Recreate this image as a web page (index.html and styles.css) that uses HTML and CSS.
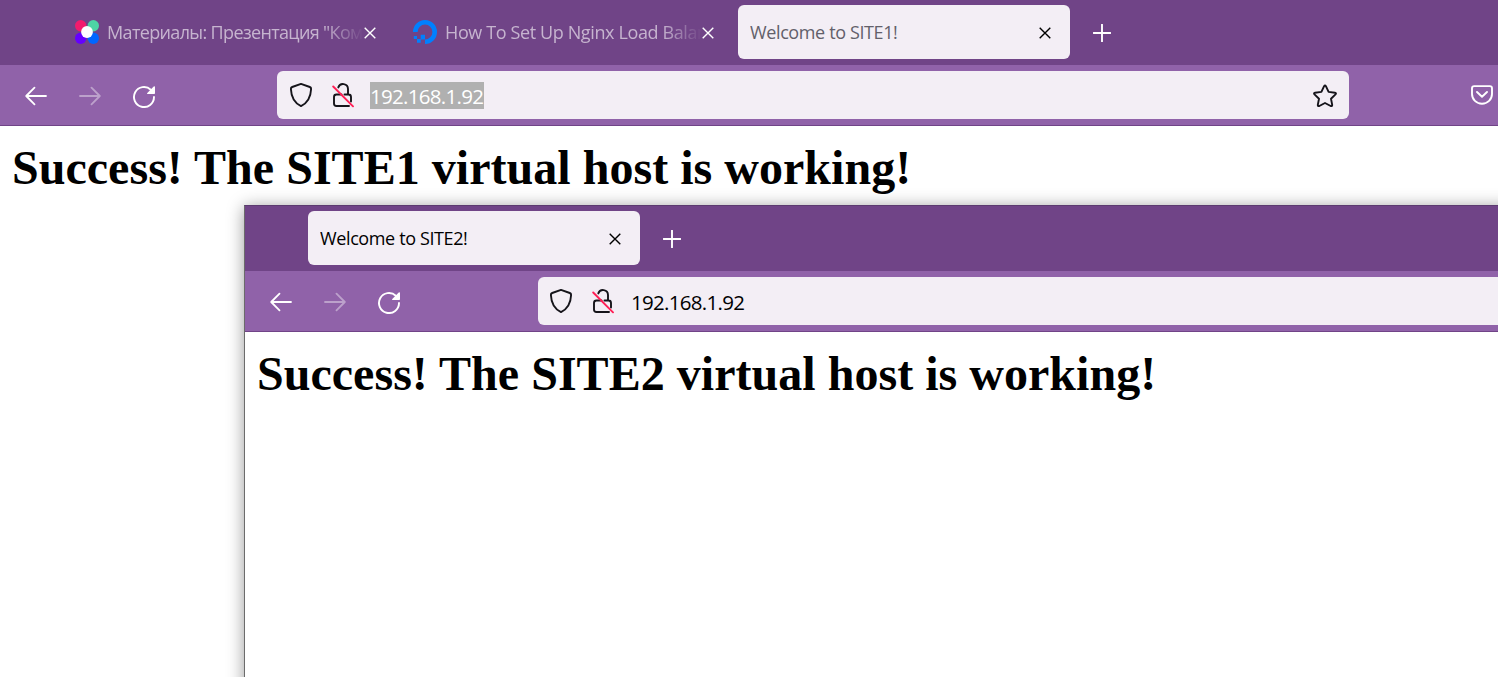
FILE: index.html
```
<!DOCTYPE html>
<html lang="en">
<head>
<meta charset="utf-8">
<title>Welcome to SITE1!</title>
<link rel="stylesheet" href="styles.css">
</head>
<body>
<svg class="defs" aria-hidden="true">
  <symbol id="close" viewBox="0 0 12 12"><path d="M.7.7l10.6 10.6M11.3.7L.7 11.3" fill="none" stroke="currentColor" stroke-width="1.4"/></symbol>
  <symbol id="plus" viewBox="0 0 18 18"><path d="M9 .5v17M.5 9h17" fill="none" stroke="currentColor" stroke-width="1.9" stroke-linecap="round"/></symbol>
  <symbol id="back" viewBox="0 0 24 24"><path d="M22 12H2.5M10.5 3.7L2.2 12l8.3 8.3" fill="none" stroke="currentColor" stroke-width="1.8" stroke-linecap="round" stroke-linejoin="round"/></symbol>
  <symbol id="reload" viewBox="0 0 24 24"><path d="M22 13a10 10 0 1 1-3.2-7.3" fill="none" stroke="currentColor" stroke-width="1.9" stroke-linecap="round"/><path d="M23 3.200v6.100q0 .8-.8.8h-6.500q-1.300 0-.4-1l6.400-6.600q1.300-.9 1.300.7z" fill="currentColor"/></symbol>
  <symbol id="shield" viewBox="0 0 24 26"><path d="M12 1.900L20.800 5q1.400.5 1.300 2C21.800 14.500 19.500 20.500 12 24.100 4.500 20.500 2.200 14.500 1.900 7q-.1-1.500 1.300-2z" fill="none" stroke="currentColor" stroke-width="1.900" stroke-linejoin="round"/></symbol>
  <symbol id="lock" viewBox="0 0 22 26"><path d="M6.300 5.400A5 5 0 0 1 16 7v5.500M9.500 12.500H4.500q-2.500 0-2.500 2.500v6.500q0 2.500 2.500 2.500h12.500M12.500 12.500h4q2.500 0 2.500 2.500v4.500" fill="none" stroke="currentColor" stroke-width="1.900" stroke-linecap="round"/><path d="M1.200 4.500l19.800 19.800" stroke="#ff1f55" stroke-width="1.900" stroke-linecap="round"/></symbol>
  <symbol id="star" viewBox="0 0 26 26"><path d="M12.100 3.200q.9-1.500 1.800 0l2.700 5.700 6.300.8q1.800.4.600 1.700l-4.500 4.300 1.200 6.200q.1 1.700-1.500 1.100L13 20l-5.700 3q-1.600.600-1.500-1.100L7 15.700l-4.500-4.300q-1.200-1.300.6-1.700l6.300-.8z" fill="none" stroke="currentColor" stroke-width="1.900" stroke-linejoin="round"/></symbol>
  <symbol id="pocket" viewBox="0 0 22 20"><path d="M3.200 1.100h15.600q2.200 0 2.200 2.200V9a10 9.700 0 0 1-20 0V3.300q0-2.200 2.200-2.200zM6 7l5 4.700L16 7" fill="none" stroke="currentColor" stroke-width="1.900" stroke-linecap="round" stroke-linejoin="round"/></symbol>
</svg>
<div class="window main-window">
  <div class="tabs">
    <div class="tab first">
      <svg class="favicon" viewBox="0 0 24 24"><circle cx="5.700" cy="5.700" r="5.700" fill="#f21b6d"/><circle cx="18.300" cy="5.700" r="5.700" fill="#4dd4a5"/><circle cx="5.700" cy="18.300" r="5.700" fill="#6500ff"/><circle cx="18.300" cy="18.300" r="5.700" fill="#0066ff"/><circle cx="12" cy="12" r="5.900" fill="#fff"/></svg>
      <span class="label faded t1">Материалы: Презентация "Ком</span>
      <svg class="close"><use href="#close"/></svg>
    </div>
    <div class="tab second">
      <svg class="favicon" viewBox="0 0 24 24"><path d="M2.300 12A9.700 9.700 0 1 1 12 21.700" fill="none" stroke="#0080ff" stroke-width="4.600"/><path d="M7.700 14.800H12v4.700H7.700zM4 19h3.700v3.700H4zM.8 16H4v3H.8z" fill="#0080ff"/></svg>
      <span class="label faded t2">How To Set Up Nginx Load Balan</span>
      <svg class="close"><use href="#close"/></svg>
    </div>
    <div class="tab active">
      <span class="label muted">Welcome to SITE1!</span>
      <svg class="close"><use href="#close"/></svg>
    </div>
    <svg class="plus"><use href="#plus"/></svg>
  </div>
  <div class="toolbar">
    <div class="nav">
      <svg><use href="#back"/></svg>
      <svg class="forward"><use href="#back"/></svg>
      <svg><use href="#reload"/></svg>
    </div>
    <div class="field">
      <svg class="shield"><use href="#shield"/></svg>
      <svg class="lock"><use href="#lock"/></svg>
      <span class="address selected">192.168.1.92</span>
      <svg class="star"><use href="#star"/></svg>
    </div>
    <svg class="pocket"><use href="#pocket"/></svg>
  </div>
  <h1>Success! The SITE1 virtual host is working!</h1>
</div>
<div class="window front-window">
  <div class="tabs">
    <div class="tab active">
      <span class="label">Welcome to SITE2!</span>
      <svg class="close"><use href="#close"/></svg>
    </div>
    <svg class="plus"><use href="#plus"/></svg>
  </div>
  <div class="toolbar">
    <div class="nav">
      <svg><use href="#back"/></svg>
      <svg class="forward"><use href="#back"/></svg>
      <svg><use href="#reload"/></svg>
    </div>
    <div class="field">
      <svg class="shield"><use href="#shield"/></svg>
      <svg class="lock"><use href="#lock"/></svg>
      <span class="address">192.168.1.92</span>
    </div>
  </div>
  <h1>Success! The SITE2 virtual host is working!</h1>
</div>
</body>
</html>
```
FILE: styles.css
```
* { box-sizing: border-box; }
body { margin: 0; width: 1498px; height: 677px; overflow: hidden; position: relative; background: #fff; font-family: "Open Sans", "Noto Sans", sans-serif; }
.defs { position: absolute; width: 0; height: 0; }
svg { display: block; flex: none; }
.window { background: #fff; overflow: hidden; }
.main-window { height: 677px; }
.front-window { position: absolute; left: 244px; top: 205px; width: 1270px; height: 490px; border-left: 1px solid #6b6b6b; border-top: 1px solid #5c3b70; box-shadow: 0 2px 16px rgba(0, 0, 0, .4); }
.tabs { display: flex; height: 65px; padding: 5px 0 6px 63px; background: #704487; color: #fff; }
.tab { display: flex; align-items: center; flex: none; height: 54px; padding: 0 19px 0 12px; border-radius: 6px; }
.first { width: 337px; padding-right: 24px; }
.second { width: 338px; padding: 0 24px 0 13px; }
.active { width: 332px; background: #f3eef5; color: #000; }
.favicon { width: 24px; height: 24px; margin-right: 8px; }
.label { flex: 1; min-width: 0; overflow: hidden; white-space: nowrap; font-size: 18px; line-height: 28px; letter-spacing: -.38px; }
.faded { color: #c6b4cf; -webkit-mask-image: linear-gradient(90deg, #000 calc(100% - 40px), transparent); mask-image: linear-gradient(90deg, #000 calc(100% - 40px), transparent); }
.t1 { letter-spacing: -.65px; }
.muted { color: #62606a; }
.close { width: 12px; height: 12px; margin-top: 1px; }
.plus { width: 18px; height: 18px; margin: 19px 0 0 23px; }
.toolbar { display: flex; height: 61px; padding: 6px 0 6px 24px; background: #9062a9; border-bottom: 1px solid #704487; color: #fff; }
.nav { display: flex; gap: 30px; width: 253px; padding-top: 13px; flex: none; }
.nav svg { width: 24px; height: 24px; }
.forward { opacity: .4; transform: scaleX(-1); }
.field { display: flex; align-items: center; flex: none; width: 1072px; height: 48px; padding: 0 11px 0 12px; border-radius: 6px; background: #f3eef5; color: #15141a; }
.shield { width: 24px; height: 26px; }
.lock { width: 22px; height: 26px; margin: 0 16px 0 19px; }
.address { font-size: 20.500px; line-height: 25px; height: 27px; padding-top: 2px; letter-spacing: -.7px; color: #000; white-space: nowrap; }
.selected { width: 114px; background: #b0b0b0; color: #fff; }
.star { width: 26px; height: 26px; margin-left: auto; margin-top: 2px; }
.pocket { width: 22px; height: 20px; margin: 14px 0 0 122px; }
.front-window .nav { width: 269px; }
.front-window .field { width: 1000px; padding-left: 11px; }
.front-window .lock { margin-right: 17px; }
h1 { margin: 13px 0 0 12px; font: bold 48px/57px "Liberation Serif", serif; letter-spacing: .03px; white-space: nowrap; }
```
